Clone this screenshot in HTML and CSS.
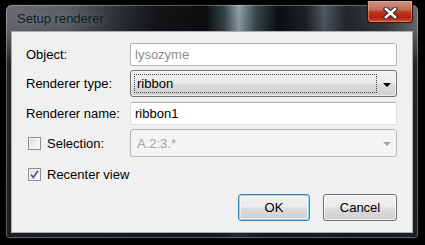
FILE: index.html
```html
<!DOCTYPE html>
<html>
<head>
<meta charset="utf-8">
<link rel="stylesheet" href="styles.css">
</head>
<body>
<div class="window">
  <div class="titlebar">
    <span class="title">Setup renderer</span>
    <div class="close">
      <svg width="15" height="12" viewBox="0 0 15 12">
        <path d="M3 2 L12 10 M12 2 L3 10" stroke="#2a2a2a" stroke-width="4.6" stroke-linecap="square" fill="none"/>
        <path d="M3 2 L12 10 M12 2 L3 10" stroke="#ffffff" stroke-width="2.6" stroke-linecap="square" fill="none"/>
      </svg>
    </div>
  </div>
  <div class="client">
    <div class="form">
      <div class="lbl r1">Object:</div>
      <div class="input readonly r1">lysozyme</div>

      <div class="lbl r2">Renderer type:</div>
      <div class="combo r2">
        <div class="focusrect">ribbon</div>
        <span class="arrow"></span>
      </div>

      <div class="lbl r3">Renderer name:</div>
      <div class="input r3">ribbon1</div>

      <div class="lbl chk r4"><span class="box"></span><span>Selection:</span></div>
      <div class="combo disabled r4">
        <div class="ctext">A.2:3.*</div>
        <span class="arrow"></span>
      </div>

      <div class="lbl chk r5 span"><span class="box checked">
        <svg width="9" height="9" viewBox="0 0 9 9"><path d="M1 4.5 L3.3 7.5 L8 0.8" stroke="#4b5f8c" stroke-width="1.7" fill="none"/></svg>
      </span><span>Recenter view</span></div>
    </div>
    <div class="buttons">
      <div class="btn default ok">OK</div>
      <div class="btn cancel">Cancel</div>
    </div>
  </div>
</div>
</body>
</html>
```

FILE: styles.css
```css
html, body {
  margin: 0;
  padding: 0;
  background: #000;
  width: 425px;
  height: 245px;
  overflow: hidden;
}
body {
  padding: 4px 6px 6px 5px;
  box-sizing: border-box;
  font-family: "Liberation Sans", Arial, sans-serif;
  font-size: 13px;
  color: #000;
}
.window {
  position: relative;
  width: 414px;
  height: 235px;
  box-sizing: border-box;
  border-radius: 7px 7px 4px 4px;
  border: 1px solid #0a0a0a;
  box-shadow: inset 0 0 0 1px rgba(255,255,255,0.28);
  padding: 0 5px 5px 5px;
  background:
    linear-gradient(180deg, rgba(0,0,0,0) 0px, rgba(0,0,0,0.1) 26px, rgba(10,12,14,0.75) 60px, rgba(20,24,28,0.9) 100%),
    linear-gradient(90deg, #6a6e73 0px, #5e6267 60px, #303337 110px, #131517 150px, #0b0d0f 200px, #36434a 218px, #8ea4a8 233px, #3b484c 250px, #0c0e10 272px, #1d2225 300px, #4f5a60 318px, #23282b 340px, #393d41 380px, #6e7277 414px);
  display: flex;
  flex-direction: column;
}
.titlebar {
  height: 26px;
  display: flex;
  align-items: center;
  padding-left: 6px;
}
.title {
  font-size: 13px;
  color: #0f1a2a;
  text-shadow: 0 0 8px rgba(220,225,230,0.35);
  margin-top: 1px;
}
.close {
  position: absolute;
  left: 361px;
  top: -4px;
  width: 46px;
  height: 22px;
  box-sizing: border-box;
  border: 1px solid #3a0c06;
  border-top: none;
  border-radius: 0 0 4px 4px;
  background: linear-gradient(180deg, #cf8f80 0%, #c6705e 40%, #c0381f 52%, #ad2510 78%, #cc5233 100%);
  box-shadow: inset 0 0 0 1px rgba(255,220,210,0.35);
  display: flex;
  align-items: center;
  justify-content: center;
  padding-top: 2px;
}
.client {
  flex: 1;
  background: #f0f0f0;
  border: 1px solid #a9adb2;
  box-sizing: border-box;
  padding: 11px 15px 0 14px;
  display: flex;
  flex-direction: column;
}
.form {
  display: grid;
  grid-template-columns: 104px 267px;
  grid-template-rows: 27px 32px 27px 29px 33px;
}
.lbl {
  display: flex;
  align-items: center;
  align-self: start;
  height: 23px;
}
.lbl.r2 { height: 27px; }
.lbl.r4 { height: 28px; }
.lbl.r5 { height: 33px; }
.span { grid-column: 1 / span 2; }
.chk { padding-left: 2px; }
.box {
  width: 13px;
  height: 13px;
  box-sizing: border-box;
  border: 1px solid #8f8f8f;
  background: linear-gradient(135deg, #dadada 0%, #f2f2f2 60%, #ffffff 100%);
  box-shadow: inset 0 0 0 1px #f4f4f4;
  margin-right: 6px;
  display: flex;
  align-items: center;
  justify-content: center;
}
.input {
  height: 23px;
  box-sizing: border-box;
  background: #fff;
  border: 1px solid #dbdfe6;
  border-top-color: #abadb3;
  border-radius: 2px;
  padding-left: 4px;
  display: flex;
  align-items: center;
  align-self: start;
}
.input.readonly {
  color: #8d8d8d;
  border-color: #b5b5b5;
}
.combo {
  position: relative;
  height: 27px;
  box-sizing: border-box;
  border: 1px solid #707070;
  border-radius: 3px;
  background: linear-gradient(180deg, #f2f2f2 0%, #ebebeb 48%, #dddddd 52%, #cfcfcf 100%);
  box-shadow: inset 0 0 0 1px rgba(255,255,255,0.6);
  align-self: start;
  padding: 3px;
}
.focusrect {
  height: 19px;
  width: 243px;
  box-sizing: border-box;
  border: 1px dotted #444;
  display: flex;
  align-items: center;
  padding-left: 2px;
}
.arrow {
  position: absolute;
  right: 5px;
  top: 12px;
  width: 0;
  height: 0;
  border-left: 4px solid transparent;
  border-right: 4px solid transparent;
  border-top: 4px solid #000;
}
.combo.disabled {
  height: 28px;
  border-color: #b4b6b8;
  background: #f4f4f4;
  box-shadow: none;
  color: #a3a3a3;
}
.ctext {
  height: 20px;
  display: flex;
  align-items: center;
  padding-left: 3px;
}
.combo.disabled .arrow {
  border-top-color: #a8a8a8;
}
.buttons {
  display: flex;
  justify-content: flex-end;
  gap: 13px;
  margin-top: 3px;
}
.btn {
  height: 27px;
  box-sizing: border-box;
  border: 1px solid #707070;
  border-radius: 3px;
  background: linear-gradient(180deg, #f2f2f2 0%, #ebebeb 48%, #dddddd 52%, #cfcfcf 100%);
  box-shadow: inset 0 0 0 1px rgba(255,255,255,0.7);
  display: flex;
  align-items: center;
  justify-content: center;
}
.ok { width: 72px; }
.cancel { width: 74px; }
.btn.default {
  border-color: #3c7fb1;
  box-shadow: inset 0 0 0 1px #9ed6f5, inset 0 0 0 2px rgba(255,255,255,0.5);
}
```
